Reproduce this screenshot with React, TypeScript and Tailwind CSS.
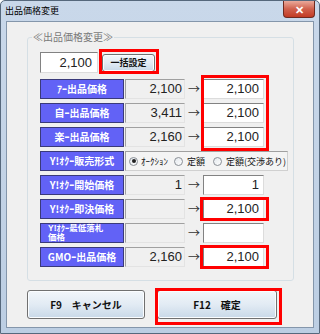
const jp = "font-['Noto_Sans_CJK_JP','Noto_Sans',sans-serif]";
const num = "font-['Liberation_Sans','Noto_Sans_CJK_JP',sans-serif]";

type Row = { label: string; cur: string; next: string; twoLine?: boolean };

const top3: Row[] = [
  { label: "ｱｰ出品価格", cur: "2,100", next: "2,100" },
  { label: "自ｰ出品価格", cur: "3,411", next: "2,100" },
  { label: "楽ｰ出品価格", cur: "2,160", next: "2,100" },
];

const rest: Row[] = [
  { label: "Y!ｵｸｰ開始価格", cur: "1", next: "1" },
  { label: "Y!ｵｸｰ即決価格", cur: "", next: "2,100" },
  { label: "Y!ｵｸｰ最低落札価格", cur: "", next: "", twoLine: true },
  { label: "GMOｰ出品価格", cur: "2,160", next: "2,100" },
];

const Label = ({ text, twoLine }: { text: string; twoLine?: boolean }) => (
  <div
    className={`w-[84px] h-[20px] shrink-0 bg-[#6262f6] border border-[#3a3a7a] text-white font-bold flex ${
      twoLine
        ? "flex-col justify-center pl-[7px] text-[8.5px] leading-[9px] font-['Liberation_Sans','Noto_Sans_CJK_JP',sans-serif]"
        : "items-center justify-center text-[10px] leading-none"
    }`}
  >
    {twoLine ? (
      <>
        <span>Y!ｵｸｰ最低落札</span>
        <span>価格</span>
      </>
    ) : (
      text
    )}
  </div>
);

const PriceRow = ({ row }: { row: Row }) => (
  <div className="flex items-center h-[20px]">
    <Label text={row.label} twoLine={row.twoLine} />
    <div className={`ml-[1px] w-[60px] h-[20px] bg-[#f0f0f0] border border-[#a0a0a0] border-r-[#e3e3e3] border-b-[#e3e3e3] text-[13px] text-[#222] flex items-center justify-end pr-[2px] ${num}`}>
      {row.cur}
    </div>
    <div className="w-[18px] text-center text-[12px] text-[#333] leading-none">→</div>
    <div className={`w-[61px] h-[20px] bg-white border border-[#828282] border-r-[#dcdcdc] border-b-[#dcdcdc] text-[13px] text-[#222] flex items-center justify-end pr-[4px] ${num}`}>
      {row.next}
    </div>
  </div>
);

const Radio = ({ on }: { on?: boolean }) => (
  <span className="shrink-0 w-[9px] h-[9px] rounded-full border border-[#8a8f96] bg-gradient-to-br from-[#e4e9ee] to-[#fdfdfd] flex items-center justify-center">
    {on && <span className="w-[4px] h-[4px] rounded-full bg-[#222]" />}
  </span>
);

const RadioRow = () => (
  <div className="flex items-center h-[20px]">
    <Label text="Y!ｵｸｰ販売形式" />
    <div className="ml-[1px] w-[163px] h-[20px] bg-[#f4f4f4] border border-[#a0a0a0] border-r-[#d0d0d0] border-b-[#d0d0d0] flex items-center pl-[3px] text-[9px] text-[#111] leading-none whitespace-nowrap overflow-hidden">
      <Radio on />
      <span className="ml-[3px]">ｵｰｸｼｮﾝ</span>
      <span className="ml-[6px]"><Radio /></span>
      <span className="ml-[4px]">定額</span>
      <span className="ml-[8px]"><Radio /></span>
      <span className="ml-[4px]">定額(交渉あり)</span>
    </div>
  </div>
);

const WinButton = ({ children, className }: { children: React.ReactNode; className: string }) => (
  <button
    className={`rounded-[3px] border border-[#707070] bg-gradient-to-b from-[#f2f6fa] via-[#e2ebf4] to-[#c9d9e8] shadow-[inset_0_0_0_1px_#fbfdff] text-[#111] font-bold flex items-center justify-center ${className}`}
  >
    {children}
  </button>
);

const RedBox = ({ className }: { className: string }) => (
  <div className={`absolute border-[3px] border-[#ff0000] pointer-events-none ${className}`} />
);

export default function App() {
  return (
    <div className={`relative w-[320px] h-[334px] overflow-hidden ${jp} bg-gradient-to-b from-[#c9d8ea] via-[#c3d3e6] to-[#bccee3] border border-[#56687c] rounded-t-[5px]`}>
      <div className="h-[20px] flex justify-between items-start">
        <div className="pl-[4px] pt-[4px] text-[9px] leading-[11px] text-black">出品価格変更</div>
        <div className="mr-[4px] w-[32px] h-[17px] rounded-b-[4px] border border-t-0 border-[#6e2a1f] bg-gradient-to-b from-[#e9a99b] via-[#d0604c] to-[#c23a22] flex items-center justify-center text-white text-[11px] font-bold leading-none">
          ✕
        </div>
      </div>
      <div className="mx-[5px] h-[307px] border border-[#8496ab] bg-[#f0f0f0]">
        <fieldset className="ml-[20px] mt-[8px] w-[267px] border border-[#d5dfe5] rounded-[3px] p-0">
          <legend className="ml-[4px] px-[1px] text-[10px] leading-[14px] text-[#7a7a7a]">≪出品価格変更≫</legend>
          <div className="pl-[12px] pt-[8px] pb-[13px]">
            <div className="flex items-center h-[21px]">
              <div className={`w-[58px] h-[21px] bg-white border border-[#828282] border-r-[#dcdcdc] border-b-[#dcdcdc] text-[13px] text-[#222] flex items-center justify-end pr-[5px] ${num}`}>
                2,100
              </div>
              <WinButton className="ml-[4px] w-[53px] h-[18px] text-[9px]">一括設定</WinButton>
            </div>
            <div className="mt-[6px] flex flex-col gap-[4px]">
              {top3.map((r) => (
                <PriceRow key={r.label} row={r} />
              ))}
              <RadioRow />
              {rest.map((r) => (
                <PriceRow key={r.label} row={r} />
              ))}
            </div>
          </div>
        </fieldset>
        <div className="flex mt-[9px] ml-[20px] gap-[12px]">
          <WinButton className="w-[118px] h-[29px] text-[10px]">F9　キャンセル</WinButton>
          <WinButton className="w-[120px] h-[29px] text-[10px]">F12　確定</WinButton>
        </div>
      </div>

      <RedBox className="left-[98px] top-[48px] w-[60px] h-[25px]" />
      <RedBox className="left-[200px] top-[74px] w-[68px] h-[76px]" />
      <RedBox className="left-[199px] top-[196px] w-[69px] h-[24px]" />
      <RedBox className="left-[199px] top-[244px] w-[69px] h-[24px]" />
      <RedBox className="left-[154px] top-[287px] w-[127px] h-[37px]" />
    </div>
  );
}
